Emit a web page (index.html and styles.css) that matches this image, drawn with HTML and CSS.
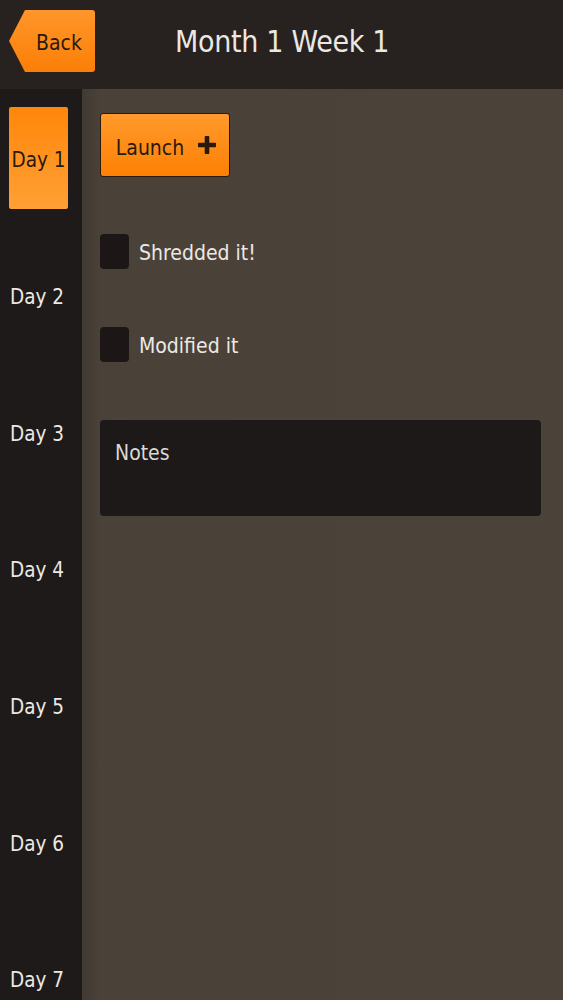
FILE: index.html
```html
<!DOCTYPE html>
<html>
<head>
<meta charset="utf-8">
<link rel="stylesheet" href="styles.css">
</head>
<body>
<div class="app">
  <header class="topbar">
    <button class="back"><span>Back</span></button>
    <h1 class="title">Month 1 Week 1</h1>
  </header>
  <div class="main">
    <nav class="sidebar">
      <div class="day"><span class="day-pill active">Day 1</span></div>
      <div class="day"><span class="day-pill">Day 2</span></div>
      <div class="day"><span class="day-pill">Day 3</span></div>
      <div class="day"><span class="day-pill">Day 4</span></div>
      <div class="day"><span class="day-pill">Day 5</span></div>
      <div class="day"><span class="day-pill">Day 6</span></div>
      <div class="day"><span class="day-pill">Day 7</span></div>
    </nav>
    <section class="content">
      <button class="launch"><span class="launch-text">Launch</span>
        <svg class="plus" width="18" height="18" viewBox="0 0 18 18"><path d="M9 1.5v15M1.5 9h15" stroke="#2a1a0c" stroke-width="4.6" stroke-linecap="round"/></svg>
      </button>
      <label class="check"><span class="box"></span><span class="check-label">Shredded it!</span></label>
      <label class="check"><span class="box"></span><span class="check-label">Modified it</span></label>
      <div class="notes">Notes</div>
    </section>
  </div>
</div>
</body>
</html>
```
FILE: styles.css
```css
* { box-sizing: border-box; }
html, body { margin: 0; padding: 0; }
body {
  width: 563px;
  height: 1000px;
  overflow: hidden;
  font-family: "DejaVu Sans Condensed", "DejaVu Sans", sans-serif;
  background: #4a4239;
}
.app { display: flex; flex-direction: column; height: 1000px; }
.topbar {
  height: 89px;
  background: #272120;
  display: flex;
  align-items: flex-start;
  flex-shrink: 0;
}
.back {
  margin: 10px 0 0 9px;
  width: 86px;
  height: 62px;
  border: none;
  padding: 3px 0 0 14px;
  background: linear-gradient(#ff962a, #fb7f07);
  clip-path: polygon(16px 0, 100% 0, 100% 100%, 16px 100%, 0 50%);
  border-radius: 0 3px 3px 0;
  font-family: inherit;
  font-size: 21px;
  color: #2a1a0c;
  display: flex;
  align-items: center;
  justify-content: center;
}
.title {
  margin: 24px 0 0 80px;
  font-size: 30px;
  font-weight: normal;
  color: #ebe8e4;
  letter-spacing: -0.3px;
}
.main { display: flex; flex: 1; }
.sidebar {
  width: 82px;
  background: #1e1a19;
  padding-top: 1px;
  display: flex;
  flex-direction: column;
}
.day {
  height: 136.7px;
  display: flex;
  align-items: center;
  justify-content: center;
  flex-shrink: 0;
}
.day-pill {
  font-size: 20.5px;
  color: #ece9e5;
  padding: 4px 8px 0 0;
}
.day-pill.active {
  width: 59px;
  height: 102px;
  margin-right: 5px;
  padding: 4px 0 0 0;
  display: flex;
  align-items: center;
  justify-content: center;
  background: linear-gradient(#ff870a, #ffa035);
  color: #2a1a0c;
  border-radius: 2px;
}
.content {
  flex: 1;
  background: linear-gradient(90deg, #403a33 0, #4a4239 18px, #4b4339 100%);
  padding: 24px 22px 0 18px;
  display: flex;
  flex-direction: column;
  align-items: flex-start;
}
.launch {
  width: 130px;
  height: 64px;
  background: linear-gradient(#ff9a2c, #fd8004);
  border: 1.5px solid #2a1a0c;
  border-radius: 3px;
  font-family: inherit;
  font-size: 21px;
  color: #2a1a0c;
  display: flex;
  align-items: center;
  justify-content: center;
  gap: 14px;
  padding: 0 0 0 2px;
}
.launch-text { padding-top: 5px; }
.plus { display: block; }
.check {
  display: flex;
  align-items: center;
  gap: 10px;
  margin-top: 57px;
  height: 35px;
}
.check + .check { margin-top: 58px; }
.box {
  width: 29px;
  height: 35px;
  background: #1c1716;
  border-radius: 4px;
}
.check-label {
  font-size: 21px;
  color: #ece9e5;
  padding-top: 3px;
}
.notes {
  margin-top: 58px;
  width: 441px;
  height: 96px;
  background: #1c1918;
  border-radius: 4px;
  padding: 21px 15px;
  font-size: 21px;
  color: #dcd9d5;
}
```
